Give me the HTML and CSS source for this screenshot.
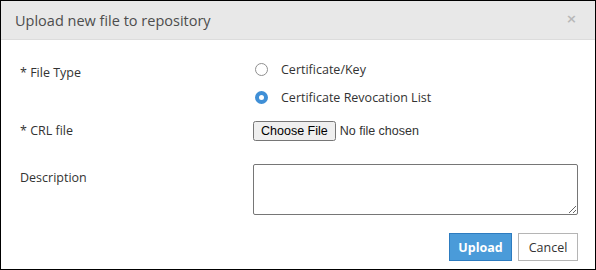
FILE: index.html
```html
<!DOCTYPE html>
<html>
<head>
<meta charset="utf-8">
<link rel="stylesheet" href="styles.css">
</head>
<body>
<div class="modal">
  <div class="modal-header">
    <h4 class="modal-title">Upload new file to repository</h4>
    <span class="close">&times;</span>
  </div>
  <div class="modal-body">
    <div class="row row-type">
      <label class="field-label">* File Type</label>
      <div class="radios">
        <div class="radio"><span class="dot"></span><span>Certificate/Key</span></div>
        <div class="radio"><span class="dot checked"></span><span>Certificate Revocation List</span></div>
      </div>
    </div>
    <div class="row row-file">
      <label class="field-label">* CRL file</label>
      <input class="file" type="file">
    </div>
    <div class="row row-desc">
      <label class="field-label">Description</label>
      <textarea class="desc"></textarea>
    </div>
  </div>
  <div class="modal-footer">
    <button class="btn btn-primary">Upload</button>
    <button class="btn btn-default">Cancel</button>
  </div>
</div>
</body>
</html>
```
FILE: styles.css
```css
html, body {
  margin: 0;
  padding: 0;
  background: #fff;
}
.modal {
  box-sizing: border-box;
  width: 596px;
  height: 270px;
  border: 1px solid #000;
  font-family: "Open Sans", sans-serif;
  font-size: 12.5px;
  color: #333;
  display: flex;
  flex-direction: column;
}
.modal-header {
  height: 38px;
  background: #e8e8e8;
  border-bottom: 1px solid #dcdcdc;
  display: flex;
  align-items: center;
  justify-content: space-between;
  padding: 0 18px 0 14px;
}
.modal-title {
  margin: 0;
  font-size: 14.5px;
  font-weight: normal;
  color: #4d4d4d;
}
.close {
  font-family: "DejaVu Sans", sans-serif;
  font-size: 13px;
  font-weight: bold;
  color: #b8b8b8;
  line-height: 1;
  margin-top: -4px;
}
.modal-body {
  padding: 15px 18px 0 19px;
}
.row {
  display: grid;
  grid-template-columns: 233px 325px;
}
.field-label {
  line-height: 20px;
}
.row-type .field-label {
  padding-top: 8px;
}
.radio {
  display: flex;
  align-items: center;
  height: 28px;
  gap: 13px;
  padding-left: 2px;
}
.dot {
  box-sizing: border-box;
  width: 13px;
  height: 13px;
  border-radius: 50%;
  border: 1px solid #8f8f8f;
  background: #fff;
}
.dot.checked {
  border: 4px solid #3f8fd6;
  background: #fff;
}
.row-file {
  margin-top: 5px;
  height: 30px;
  align-items: center;
}
.file {
  font-family: "Liberation Sans", Arial, sans-serif;
  font-size: 12.5px;
  color: #333;
  margin: 0;
}
.file::file-selector-button {
  font-family: "Liberation Sans", Arial, sans-serif;
  font-size: 12.5px;
  padding: 1px 6px;
  margin-right: 4px;
}
.row-desc {
  margin-top: 18px;
}
.row-desc .field-label {
  padding-top: 4px;
}
.desc {
  box-sizing: border-box;
  width: 325px;
  height: 51px;
  border: 1px solid #767676;
  border-radius: 2px;
  margin: 0;
  display: block;
}
.modal-footer {
  display: flex;
  justify-content: flex-end;
  gap: 6px;
  padding: 18px 17px 0 0;
}
.btn {
  box-sizing: border-box;
  height: 28px;
  font-family: "Open Sans", sans-serif;
  font-size: 12.5px;
  border-radius: 0;
  margin: 0;
  padding: 0 8px;
}
.btn-primary {
  width: 63px;
  background: #4a9bd9;
  border: 1px solid #2d7cc0;
  color: #fff;
  font-weight: bold;
}
.btn-default {
  width: 60px;
  background: #fff;
  border: 1px solid #b5b5b5;
  color: #333;
}
```
